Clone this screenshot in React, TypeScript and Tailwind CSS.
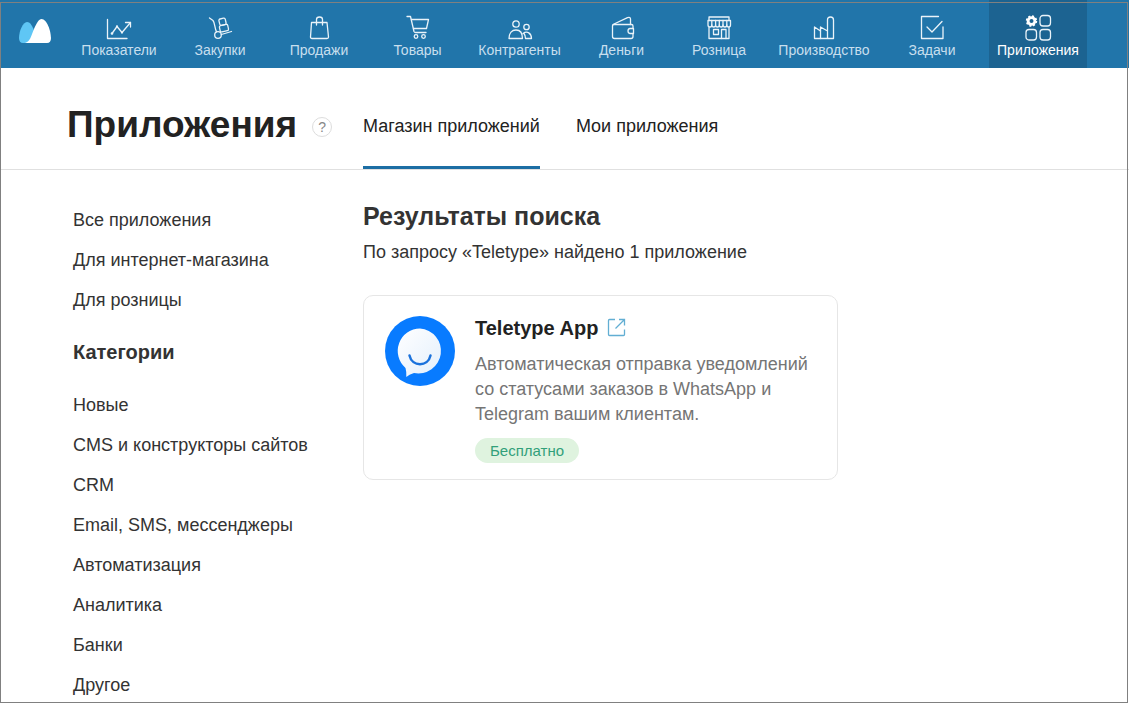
import type { ReactNode } from "react";

type NavItem = { label: string; width: string; icon: ReactNode; active?: boolean };

function Icon({ children }: { children: ReactNode }) {
  return (
    <svg
      aria-hidden="true"
      viewBox="0 0 28 28"
      className="h-7 w-7"
      fill="none"
      stroke="#eaf3f9"
      strokeWidth="1.3"
      strokeLinecap="round"
      strokeLinejoin="round"
    >
      {children}
    </svg>
  );
}

const nav: NavItem[] = [
  {
    label: "Показатели",
    width: "w-[104px]",
    icon: (
      <Icon>
        <path d="M2.5 5.5V24.5H22" />
        <path d="M7 19.5L12 12.500L17 18.500L25.5 8.500" />
        <path d="M20.5 8.500H25.5V13" />
        <circle cx="7" cy="19.500" r="0.700" />
        <circle cx="12" cy="12.500" r="0.500" />
        <circle cx="17" cy="18.500" r="0.500" />
      </Icon>
    ),
  },
  {
    label: "Закупки",
    width: "w-[98px]",
    icon: (
      <Icon>
        <path d="M3.500 4L7 6.500C9 9 8.500 14 10.500 17.800" />
        <circle cx="12" cy="21" r="3.300" />
        <path d="M15.300 20.500L25.500 17.500" />
        <g transform="rotate(-13 17 11)">
          <rect x="13" y="11" width="8.500" height="6.500" rx="1.500" />
          <rect x="14" y="4.500" width="6.500" height="6.500" rx="1.500" />
        </g>
      </Icon>
    ),
  },
  {
    label: "Продажи",
    width: "w-[100px]",
    icon: (
      <Icon>
        <path d="M6.500 8.500H22L23.500 23Q23.500 24.500 22 24.500H7Q5.500 24.500 5.500 23Z" />
        <path d="M11.500 11V5.500Q11.500 3 14.500 3Q17.500 3 17.500 5.500V11" />
      </Icon>
    ),
  },
  {
    label: "Товары",
    width: "w-[97px]",
    icon: (
      <Icon>
        <path d="M3 2.500H6.500L10 17.500Q10.500 18.500 11.500 18.500H22" />
        <path d="M7.500 5.500H24.500L22.500 14.500H9.500" />
        <circle cx="12" cy="22.500" r="1.800" />
        <circle cx="19.500" cy="22.500" r="1.800" />
      </Icon>
    ),
  },
  {
    label: "Контрагенты",
    width: "w-[107px]",
    icon: (
      <Icon>
        <circle cx="10" cy="10" r="3.200" />
        <circle cx="20.500" cy="13" r="2.700" />
        <path d="M3 24.500C3 19 6 16 10 16C14 16 16.500 19 16.500 24.500Z" />
        <path d="M17 19.500C21 16.500 25.500 19 25.500 24.500H19.500Q19.500 21.500 18 19.500" />
      </Icon>
    ),
  },
  {
    label: "Деньги",
    width: "w-[97px]",
    icon: (
      <Icon>
        <path d="M25 14.500V12Q25 10.500 23.500 10.500H6Q4.500 10.500 4.500 12V22.500Q4.500 24.500 6.500 24.500H23Q25 24.500 25 22.500V19.500" />
        <path d="M25.500 14.500H22Q20 14.700 20 17Q20 19.300 22 19.500H25.500Z" />
        <path d="M5 10.500L19.500 3.700Q22.500 2.800 22.500 5V10.500" />
      </Icon>
    ),
  },
  {
    label: "Розница",
    width: "w-[98px]",
    icon: (
      <Icon>
        <path d="M4 3H24V6.500M4 3V6.500M4 13.500V24.500H24V13.500" />
        <path d="M3 6.500H25.500V11Q25.500 13 23.600 13Q21.800 13 21.800 11Q21.800 13 20 13Q18 13 18 11Q18 13 16.200 13Q14.300 13 14.300 11Q14.300 13 12.400 13Q10.600 13 10.600 11Q10.600 13 8.700 13Q6.800 13 6.800 11Q6.800 13 5 13Q3 13 3 11Z" />
        <path d="M6.800 6.500V11M10.600 6.500V11M14.300 6.500V11M18 6.500V11M21.800 6.500V11" />
        <path d="M8.500 15.500H13.500V20.500H8.500ZM16.500 24.500V15.500H21V24.500" />
      </Icon>
    ),
  },
  {
    label: "Производство",
    width: "w-[112px]",
    icon: (
      <Icon>
        <path d="M17.500 24.500V6Q17.500 3 20.500 3Q23.500 3 23.500 6V24.500H4.500V13L10.500 17V13L17.500 17" />
        <path d="M10.500 17V24.500" />
      </Icon>
    ),
  },
  {
    label: "Задачи",
    width: "w-[104px]",
    icon: (
      <Icon>
        <path d="M20.500 2.500H3.500V24.500H25V13" />
        <path d="M9 13L14 18L24 7.500" />
      </Icon>
    ),
  },
  {
    label: "Приложения",
    width: "ml-[5px] w-[98px]",
    active: true,
    icon: (
      <Icon>
        <circle cx="7.500" cy="7" r="3.400" stroke="#fff" strokeWidth="2.800" />
        <circle
          cx="7.500"
          cy="7"
          r="4.900"
          stroke="#fff"
          strokeWidth="1.600"
          strokeDasharray="2 1.848"
          strokeLinecap="butt"
        />
        <rect x="16" y="1.500" width="10.500" height="10.500" rx="3" />
        <rect x="2" y="15.500" width="10.500" height="10.500" rx="3" />
        <rect x="16" y="15.500" width="10.500" height="10.500" rx="3" />
      </Icon>
    ),
  },
];

const sections = ["Все приложения", "Для интернет-магазина", "Для розницы"];
const categories = [
  "Новые",
  "CMS и конструкторы сайтов",
  "CRM",
  "Email, SMS, мессенджеры",
  "Автоматизация",
  "Аналитика",
  "Банки",
  "Другое",
];

function SideLinks({ items }: { items: string[] }) {
  return (
    <ul>
      {items.map((item) => (
        <li key={item}>
          <a href="#" className="block h-10 text-lg leading-10 whitespace-nowrap">
            {item}
          </a>
        </li>
      ))}
    </ul>
  );
}

function Logo() {
  return (
    <svg aria-hidden="true" viewBox="0 0 32 24" className="h-6 w-8">
      <path d="M8 3C11.500 3 14 8 15.500 13L9 24H4Q0 24 0 19C0 12 4 3 8 3Z" fill="#5fc6f5" />
      <path d="M6 24C11 23 12.500 16 15 10C17.500 4 20 0 22.500 0C28 0 32 12 32 19Q32 24 28 24Z" fill="#fff" />
    </svg>
  );
}

function TeletypeLogo() {
  return (
    <svg aria-hidden="true" viewBox="0 0 70 70" className="h-[70px] w-[70px] shrink-0">
      <defs>
        <linearGradient id="bubble" x1="0" y1="0" x2="1" y2="1">
          <stop offset="0" stopColor="#fff" />
          <stop offset="1" stopColor="#e3effc" />
        </linearGradient>
      </defs>
      <circle cx="35" cy="35" r="35" fill="#087bff" />
      <path
        d="M35 12.500A22.500 22.500 0 1 1 29 57Q24 58.500 21.300 61Q21.500 55 20.500 52A22.500 22.500 0 0 1 35 12.500Z"
        fill="url(#bubble)"
      />
      <path
        d="M24.500 39.500C27 51 43 51 45.500 39.500"
        fill="none"
        stroke="#1b72dc"
        strokeWidth="2.500"
        strokeLinecap="round"
      />
    </svg>
  );
}

export default function App() {
  return (
    <div className="relative min-h-screen bg-white font-['Liberation_Sans',Arial,sans-serif] text-[#333]">
      <header className="flex h-[68px] bg-[#2175aa]">
        <a href="#" aria-label="Главная" className="flex w-[67px] shrink-0 items-start pt-[19px] pl-[19px]">
          <Logo />
        </a>
        <nav className="flex">
          {nav.map((item) => (
            <a
              key={item.label}
              href="#"
              aria-current={item.active ? "page" : undefined}
              className={`${item.width} flex shrink-0 flex-col items-center pt-[14px] text-sm leading-4 ${
                item.active ? "bg-[#1c6391] text-white" : "text-[#c8dfee]"
              }`}
            >
              {item.icon}
              <span>{item.label}</span>
            </a>
          ))}
        </nav>
      </header>

      <div className="flex h-[102px] border-b border-[#e0e0e0] pl-[67px]">
        <div className="flex w-[296px] shrink-0 items-center gap-[15px] pt-[13px]">
          <h1 className="text-[37px] leading-[48px] font-bold text-[#222]">Приложения</h1>
          <button
            type="button"
            aria-label="Справка"
            className="mt-1 flex h-5 w-5 items-center justify-center rounded-full border border-[#ddd] text-sm leading-4 text-[#888]"
          >
            ?
          </button>
        </div>
        <nav className="flex gap-9 text-lg leading-6 text-[#222]">
          <a href="#" className="border-b-3 border-[#1c6ea4] pt-[46px]">
            Магазин приложений
          </a>
          <a href="#" className="pt-[46px]">
            Мои приложения
          </a>
        </nav>
      </div>

      <div className="flex">
        <aside className="w-[363px] shrink-0 pt-[30px] pl-[73px]">
          <SideLinks items={sections} />
          <h2 className="pt-5 pb-[21px] text-xl leading-6 font-bold">Категории</h2>
          <SideLinks items={categories} />
        </aside>
        <main className="flex-1 pt-[30px]">
          <h2 className="text-[25px] leading-8 font-bold">Результаты поиска</h2>
          <p className="mt-2 text-lg leading-6">По запросу «Teletype» найдено 1 приложение</p>
          <article className="mt-[31px] flex max-w-[475px] gap-5 rounded-[10px] border border-[#e6e6e6] p-[21px] pt-5 pb-4">
            <TeletypeLogo />
            <div>
              <h3 className="flex items-center gap-[9px] text-xl leading-6 font-bold text-[#222]">
                Teletype App
                <a href="#" aria-label="Открыть приложение">
                  <svg viewBox="0 0 20 20" className="h-5 w-5" fill="none" stroke="#62aed3" strokeWidth="1.300">
                    <path d="M8 1.500H2.500Q1.500 1.500 1.500 2.500V16.500Q1.500 17.500 2.500 17.500H16.500Q17.500 17.500 17.500 16.500V11.500" />
                    <path d="M12 1.500H17.500V7.500M17.500 1.500L8.500 10.500" />
                  </svg>
                </a>
              </h3>
              <p className="mt-3 text-lg leading-[25px] text-[#757575]">
                Автоматическая отправка уведомлений со статусами заказов в WhatsApp и Telegram вашим клиентам.
              </p>
              <span className="mt-[11px] block w-fit rounded-full bg-[#dff3df] px-[15px] text-[15px] leading-[25px] text-[#31a07a]">
                Бесплатно
              </span>
            </div>
          </article>
        </main>
      </div>

      <div className="pointer-events-none absolute top-[2px] right-px bottom-[2px] left-0 border border-[#808080]" />
    </div>
  );
}
